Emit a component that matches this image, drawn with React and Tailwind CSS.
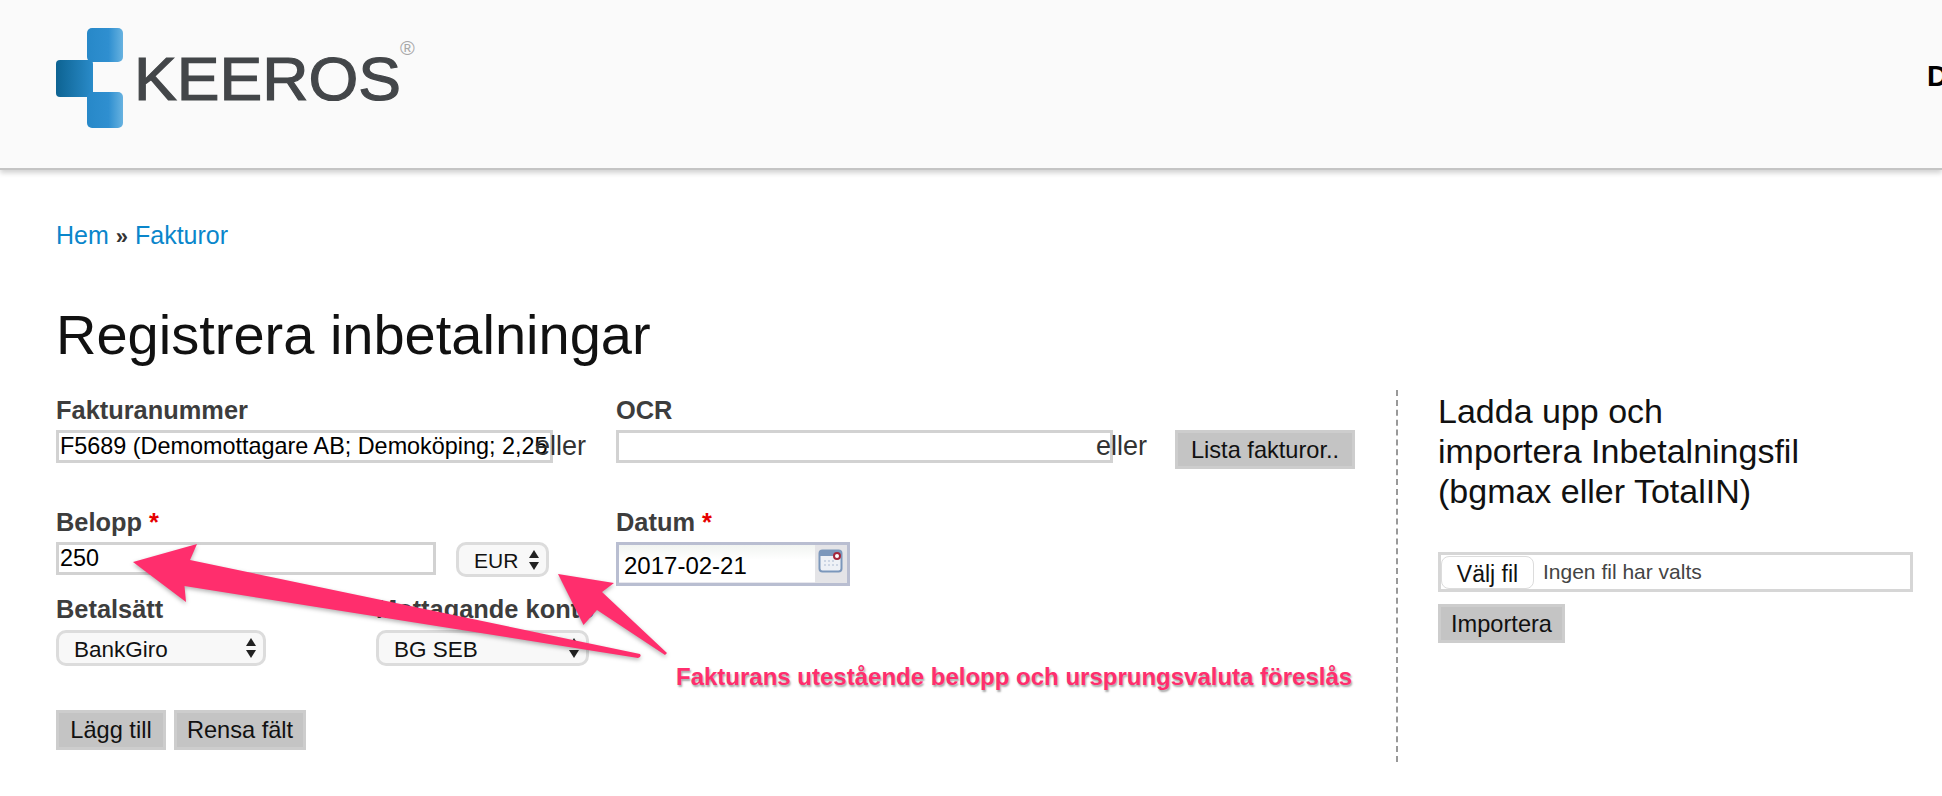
import React from 'react';

const Logo = () => (
    <svg width="380" height="110" viewBox="0 0 380 110" className="block">
        <defs>
            <linearGradient id="logoLeft" x1="0" x2="1" y1="0" y2="0">
                <stop offset="0" stopColor="#0d6392" />
                <stop offset="1" stopColor="#2a8bc9" />
            </linearGradient>
            <linearGradient id="logoRight" x1="0" x2="1" y1="0" y2="0">
                <stop offset="0" stopColor="#2788c8" />
                <stop offset="0.6" stopColor="#2f8fd0" />
                <stop offset="1" stopColor="#67b2e0" />
            </linearGradient>
        </defs>
        <rect x="0" y="41" width="37" height="37" rx="4" fill="url(#logoLeft)" />
        <rect x="31" y="9" width="36" height="34" rx="5" fill="url(#logoRight)" />
        <rect x="31" y="73" width="36" height="36" rx="5" fill="url(#logoRight)" />
        <text
            x="78"
            y="81"
            textLength="267"
            lengthAdjust="spacingAndGlyphs"
            fontFamily="Liberation Sans, Arial, sans-serif"
            fontSize="62"
            fill="#434649"
            stroke="#434649"
            strokeWidth="1.2"
        >
            KEEROS
        </text>
        <text x="344" y="36" fontFamily="Liberation Sans, Arial, sans-serif" fontSize="20" fill="#a8a8a8">®</text>
    </svg>
);

const Label = ({ children, required }) => (
    <div className="h-[30px] leading-[30px] text-[25.4px] font-bold text-[#3d3d3d] whitespace-nowrap">
        {children}
        {required && <span className="text-[#e60000]"> *</span>}
    </div>
);

const TextInput = ({ width, value = '' }) => (
    <input
        readOnly
        value={value}
        className={`${width} h-[33px] border-[3px] border-[#d2d2d2] bg-white px-[1px] text-[23.4px] text-black outline-none`}
    />
);

const UpDown = () => (
    <svg width="12" height="22" viewBox="0 0 12 22" className="absolute right-[9px] top-1/2 -translate-y-1/2">
        <path d="M6 1 L11 9 L1 9 Z M6 21 L11 13 L1 13 Z" fill="#222" />
    </svg>
);

const Select = ({ width, height, pad, size = 'text-[22.5px]', value }) => (
    <div className={`${width} ${height} relative`}>
        <select className={`${pad} ${size} w-full h-full appearance-none rounded-[10px] border-[3px] border-[#dcdcdc] bg-[#f8f8f8] text-[#111] outline-none`}>
            <option>{value}</option>
        </select>
        <UpDown />
    </div>
);

const Button = ({ width, height = 'h-[40px]', children }) => (
    <button className={`${width} ${height} border-[3px] border-[#cdcdcd] bg-[#c4c4c4] text-[23.6px] text-[#111]`}>
        {children}
    </button>
);

const CalendarIcon = () => (
    <svg width="26" height="26" viewBox="0 0 26 26">
        <rect x="1.5" y="2.5" width="22" height="21" rx="3" fill="#eef1f6" stroke="#7b97bb" strokeWidth="2" />
        <rect x="2" y="3" width="21" height="5" fill="#7b97bb" />
        <path d="M6 12h2v2H6zM10 12h2v2h-2zM14 12h2v2h-2zM6 16h2v2H6zM10 16h2v2h-2zM14 16h2v2h-2zM18 16h2v2h-2z" fill="#cdd6e4" />
        <circle cx="19" cy="8" r="3" fill="#fff" stroke="#a5263a" strokeWidth="2" />
    </svg>
);

const Arrows = () => (
    <svg
        width="1942"
        height="796"
        viewBox="0 0 1942 796"
        className="absolute left-0 top-0 pointer-events-none drop-shadow-[0_2px_2px_rgba(0,0,0,0.3)]"
    >
        <path
            d="M133 562 L197 544 L190 560 L640 654 Q642 657 638 658 L184.5 586 L186 602 Z"
            fill="#ff2e6d"
        />
        <path
            d="M558 574 L614 583 L602 592 L667 653 L665 655 L597 610 L583.5 625 Z"
            fill="#ff2e6d"
        />
    </svg>
);

export default function App() {
    return (
        <div className="relative h-[796px] w-[1942px] overflow-hidden bg-white font-['Liberation_Sans',Arial,sans-serif] text-black">
            {/* Header */}
            <header className="flex h-[170px] items-center justify-between border-b-2 border-[#c4c4c4] bg-[#fafafa] pl-[56px] shadow-[0_3px_5px_rgba(0,0,0,0.18)]">
                <div className="-mt-[20px]">
                    <Logo />
                </div>
                <div className="-mr-[6px] -mt-[15px] w-[21px] text-[29px] font-bold">D</div>
            </header>

            <main className="pl-[56px]">
                <div className="mt-[50px] h-[30px] text-[25px] leading-[30px] text-[#0a86cb]">
                    <a>Hem</a> <span className="text-[22px] font-bold text-[#333]">»</span> <a>Fakturor</a>
                </div>
                <h1 className="mt-[55px] h-[60px] text-[56px] font-normal leading-[60px] text-[#111]">Registrera inbetalningar</h1>

                <div className="mt-[25px] flex">
                    {/* Form */}
                    <div className="h-[372px] w-[1342px] border-r-2 border-dashed border-[#999] pt-[5px]">
                        <div className="flex">
                            <div className="w-[560px]">
                                <div className="mb-[5px]"><Label>Fakturanummer</Label></div>
                                <div className="flex items-start">
                                    <TextInput width="w-[497px]" value="F5689 (Demomottagare AB; Demoköping; 2,25" />
                                    <span className="relative -ml-[18px] text-[27px] leading-[33px] text-[#333]">eller</span>
                                </div>
                            </div>
                            <div>
                                <div className="mb-[5px]"><Label>OCR</Label></div>
                                <div className="flex items-start">
                                    <TextInput width="w-[497px]" />
                                    <span className="relative -ml-[17px] text-[27px] leading-[33px] text-[#333]">eller</span>
                                    <div className="ml-[28px]">
                                        <Button width="w-[180px]" height="h-[39px]">Lista fakturor..</Button>
                                    </div>
                                </div>
                            </div>
                        </div>

                        <div className="mt-[38px] flex">
                            <div className="w-[560px]">
                                <div className="mb-[5px]"><Label required>Belopp</Label></div>
                                <div className="flex items-start gap-[20px]">
                                    <TextInput width="w-[380px]" value="250" />
                                    <Select width="w-[93px]" height="h-[35px]" pad="pl-[15px]" size="text-[21px]" value="EUR" />
                                </div>
                                <div className="mt-[17px] flex">
                                    <div className="w-[320px]">
                                        <div className="mb-[6px]"><Label>Betalsätt</Label></div>
                                        <Select width="w-[210px]" height="h-[36px]" pad="pl-[15px]" value="BankGiro" />
                                    </div>
                                    <div>
                                        <div className="mb-[6px]"><Label>Mottagande konto</Label></div>
                                        <Select width="w-[213px]" height="h-[36px]" pad="pl-[15px]" value="BG SEB" />
                                    </div>
                                </div>
                            </div>
                            <div>
                                <div className="mb-[5px]"><Label required>Datum</Label></div>
                                <div className="flex h-[44px] w-[234px] border-[3px] border-[#b9bed1] bg-[#e4e4e7]">
                                    <div className="flex w-[196px] items-center border-b border-[#e8e8ee] bg-gradient-to-b from-[#f1f4f1] to-white to-40% pl-[5px] pt-[4px] text-[24px] text-black">
                                        2017-02-21
                                    </div>
                                    <div className="flex flex-1 items-start justify-center pt-[3px]">
                                        <CalendarIcon />
                                    </div>
                                </div>
                            </div>
                        </div>

                        <div className="mt-[44px] flex gap-[8px]">
                            <Button width="w-[110px]">Lägg till</Button>
                            <Button width="w-[132px]">Rensa fält</Button>
                        </div>
                    </div>

                    {/* Import panel */}
                    <div className="pl-[40px]">
                        <h2 className="mt-[1px] w-[460px] text-[34px] font-normal leading-[40px] text-[#111]">
                            Ladda upp och<br />importera Inbetalningsfil<br />(bgmax eller TotalIN)
                        </h2>
                        <div className="mt-[41px] flex h-[40px] w-[475px] items-center border-[3px] border-[#d6d6d6] bg-white">
                            <button className="h-[33px] w-[93px] rounded-[8px] border border-[#dcdcdc] bg-white text-[23px] text-[#111]">Välj fil</button>
                            <span className="ml-[9px] text-[21px] text-[#444]">Ingen fil har valts</span>
                        </div>
                        <div className="mt-[12px]">
                            <Button width="w-[127px]" height="h-[39px]">Importera</Button>
                        </div>
                    </div>
                </div>
            </main>

            <Arrows />

            {/* Annotation */}
            <div className="absolute left-[676px] top-[664px] text-[24px] font-bold leading-[26px] whitespace-nowrap text-[#ff2e6d] [text-shadow:1px_2px_2px_rgba(0,0,0,0.35)]">
                Fakturans utestående belopp och ursprungsvaluta föreslås
            </div>
        </div>
    );
}
